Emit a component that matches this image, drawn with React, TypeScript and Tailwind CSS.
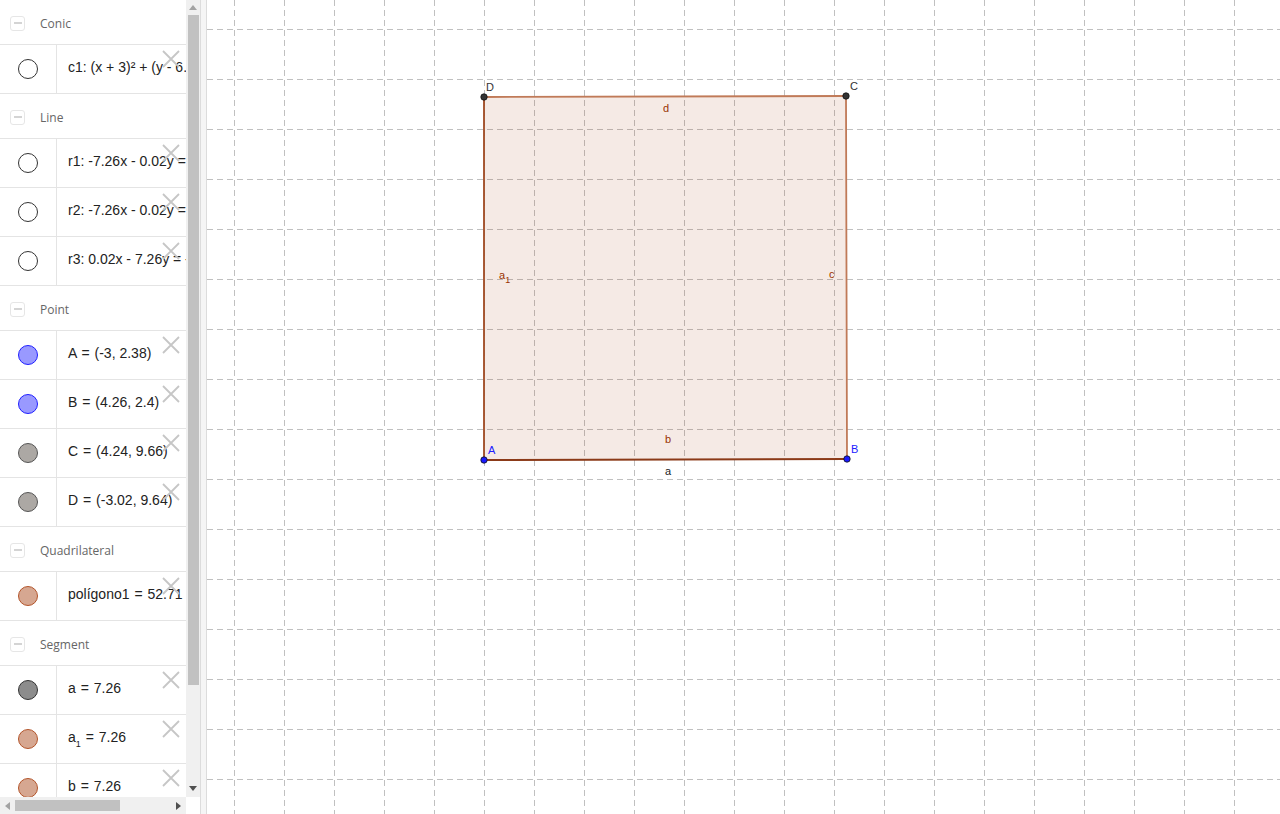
import type { ReactNode } from 'react';

type Dot = 'empty' | 'blue' | 'gray' | 'brown' | 'dark';

type Item = { dot: Dot; text: ReactNode };
type Section = { title: string; items: Item[] };

const dotClass: Record<Dot, string> = {
  empty: 'bg-white border-[#333333]',
  blue: 'bg-[#9999ff] border-[#2020ff]',
  gray: 'bg-[#aca8a4] border-[#555555]',
  brown: 'bg-[#d6a791] border-[#b3552b]',
  dark: 'bg-[#8c8c8c] border-[#333333]',
};

const Eq = () => <span className="mx-[1px]">=</span>;

const sections: Section[] = [
  {
    title: 'Conic',
    items: [{ dot: 'empty', text: <>c1: (x + 3)² + (y - 6.01)² = 13.18</> }],
  },
  {
    title: 'Line',
    items: [
      { dot: 'empty', text: <>r1: -7.26x - 0.02y = -11.43</> },
      { dot: 'empty', text: <>r2: -7.26x - 0.02y = 21.83</> },
      { dot: 'empty', text: <>r3: 0.02x - 7.26y = -17.3</> },
    ],
  },
  {
    title: 'Point',
    items: [
      { dot: 'blue', text: <>A <Eq /> (-3, 2.38)</> },
      { dot: 'blue', text: <>B <Eq /> (4.26, 2.4)</> },
      { dot: 'gray', text: <>C <Eq /> (4.24, 9.66)</> },
      { dot: 'gray', text: <>D <Eq /> (-3.02, 9.64)</> },
    ],
  },
  {
    title: 'Quadrilateral',
    items: [{ dot: 'brown', text: <>polígono1 <Eq /> 52.71</> }],
  },
  {
    title: 'Segment',
    items: [
      { dot: 'dark', text: <>a <Eq /> 7.26</> },
      {
        dot: 'brown',
        text: (
          <>
            a<sub className="text-[9px] align-[-3px]">1</sub> <Eq /> 7.26
          </>
        ),
      },
      { dot: 'brown', text: <>b <Eq /> 7.26</> },
      { dot: 'brown', text: <>c <Eq /> 7.26</> },
      { dot: 'brown', text: <>d <Eq /> 7.26</> },
    ],
  },
];

function CloseX() {
  return (
    <svg width="18" height="18" viewBox="0 0 18 18" className="absolute right-[6px] top-[5px]">
      <path d="M1 1 L17 17 M17 1 L1 17" stroke="#c6c6c6" strokeWidth="1.8" fill="none" />
    </svg>
  );
}

function SectionHeader({ title }: { title: string }) {
  return (
    <div className="h-[45px] flex items-center border-b border-[#e4e4e4] shrink-0">
      <div className="ml-[10px] mt-[2px] w-[15px] h-[15px] rounded-[3px] border border-[#e6e6e6] flex items-center justify-center">
        <div className="w-[8px] h-[2px] bg-[#d4d4d4]" />
      </div>
      <span className="ml-[15px] pt-[3px] text-[12px] text-[#666666]">{title}</span>
    </div>
  );
}

function ItemRow({ item }: { item: Item }) {
  return (
    <div className="h-[49px] flex border-b border-[#e4e4e4] shrink-0">
      <div className="w-[57px] border-r border-[#e4e4e4] flex items-center justify-center shrink-0">
        <div className={`w-[20px] h-[20px] rounded-full border ${dotClass[item.dot]}`} />
      </div>
      <div className="relative flex-1 flex items-center pl-[11px] pb-[3px] overflow-hidden text-[14px] text-[#222222] font-['Liberation_Sans',sans-serif]">
        <span className="whitespace-pre">{item.text}</span>
        <CloseX />
      </div>
    </div>
  );
}

function AlgebraView() {
  return (
    <aside className="w-[200px] h-full flex flex-col shrink-0 bg-white">
      <div className="flex-1 flex min-h-0">
        <div className="w-[186px] flex flex-col overflow-hidden">
          {sections.map((s) => (
            <div key={s.title} className="flex flex-col">
              <SectionHeader title={s.title} />
              {s.items.map((it, i) => (
                <ItemRow key={i} item={it} />
              ))}
            </div>
          ))}
        </div>
        {/* vertical scrollbar */}
        <div className="w-[14px] bg-[#f0f0f0] flex flex-col items-center">
          <div className="h-[15px] flex items-center justify-center">
            <svg width="8" height="5" viewBox="0 0 8 5">
              <path d="M0 5 L4 0 L8 5 Z" fill="#a3a3a3" />
            </svg>
          </div>
          <div className="w-[11px] h-[670px] bg-[#c1c1c1]" />
          <div className="flex-1" />
          <div className="h-[18px] flex items-center justify-center">
            <svg width="8" height="5" viewBox="0 0 8 5">
              <path d="M0 0 L8 0 L4 5 Z" fill="#505050" />
            </svg>
          </div>
        </div>
      </div>
      {/* horizontal scrollbar */}
      <div className="h-[17px] flex">
        <div className="w-[186px] bg-[#f0f0f0] flex items-center">
          <div className="w-[15px] flex items-center justify-center">
            <svg width="5" height="8" viewBox="0 0 5 8">
              <path d="M5 0 L5 8 L0 4 Z" fill="#a3a3a3" />
            </svg>
          </div>
          <div className="w-[105px] h-[11px] bg-[#c1c1c1]" />
          <div className="flex-1" />
          <div className="w-[15px] flex items-center justify-center">
            <svg width="5" height="8" viewBox="0 0 5 8">
              <path d="M0 0 L5 4 L0 8 Z" fill="#505050" />
            </svg>
          </div>
        </div>
        <div className="flex-1 bg-white" />
      </div>
    </aside>
  );
}

const vLines = Array.from({ length: 21 }, (_, k) => 234 + 50 * k);
const hLines = Array.from({ length: 16 }, (_, k) => 29 + 50 * k);

function GraphicsView() {
  return (
    <div className="flex-1 h-full bg-white">
      <svg width="1073" height="814" viewBox="207 0 1073 814" className="block">
        <g stroke="#c0c0c0" strokeWidth="1" strokeDasharray="6 4">
          {vLines.map((x) => (
            <line key={`v${x}`} x1={x + 0.5} y1={0} x2={x + 0.5} y2={814} />
          ))}
          {hLines.map((y) => (
            <line key={`h${y}`} x1={207} y1={y + 0.5} x2={1280} y2={y + 0.5} />
          ))}
        </g>
        <polygon points="484,460 847,459 846,96 484,97" fill="#993300" fillOpacity="0.1" />
        <g fill="none" strokeLinecap="round">
          <line x1="484" y1="97" x2="846" y2="96" stroke="#c07a58" strokeWidth="1.8" />
          <line x1="846" y1="96" x2="847" y2="459" stroke="#c07a58" strokeWidth="1.8" />
          <line x1="484" y1="460" x2="484" y2="97" stroke="#a04a22" strokeWidth="1.8" />
          <line x1="484" y1="460" x2="847" y2="459" stroke="#8b3a18" strokeWidth="2" />
        </g>
        <g fontFamily="Liberation Sans, sans-serif" fontSize="11">
          <text x="486" y="91" fill="#333333">D</text>
          <text x="850" y="90" fill="#333333">C</text>
          <text x="488" y="454" fill="#2020ff">A</text>
          <text x="851" y="453" fill="#2020ff">B</text>
          <text x="663" y="112" fill="#993300">d</text>
          <text x="829" y="278" fill="#993300">c</text>
          <text x="499" y="279" fill="#993300">
            a<tspan fontSize="9" dy="4">1</tspan>
          </text>
          <text x="665" y="443" fill="#993300">b</text>
          <text x="665" y="475" fill="#222222">a</text>
        </g>
        <circle cx="484" cy="97" r="3.2" fill="#333333" stroke="#111111" strokeWidth="0.8" />
        <circle cx="846" cy="96" r="3.2" fill="#333333" stroke="#111111" strokeWidth="0.8" />
        <circle cx="484" cy="460" r="3.2" fill="#1a1aff" stroke="#111111" strokeWidth="0.8" />
        <circle cx="847" cy="459" r="3.2" fill="#1a1aff" stroke="#111111" strokeWidth="0.8" />
      </svg>
    </div>
  );
}

export default function App() {
  return (
    <main className="w-[1280px] h-[814px] flex overflow-hidden bg-white font-['Open_Sans',sans-serif]">
      <AlgebraView />
      {/* splitter */}
      <div className="w-[7px] h-full bg-[#f5f5f5] border-l border-r border-[#dcdcdc] shrink-0" />
      <GraphicsView />
    </main>
  );
}
